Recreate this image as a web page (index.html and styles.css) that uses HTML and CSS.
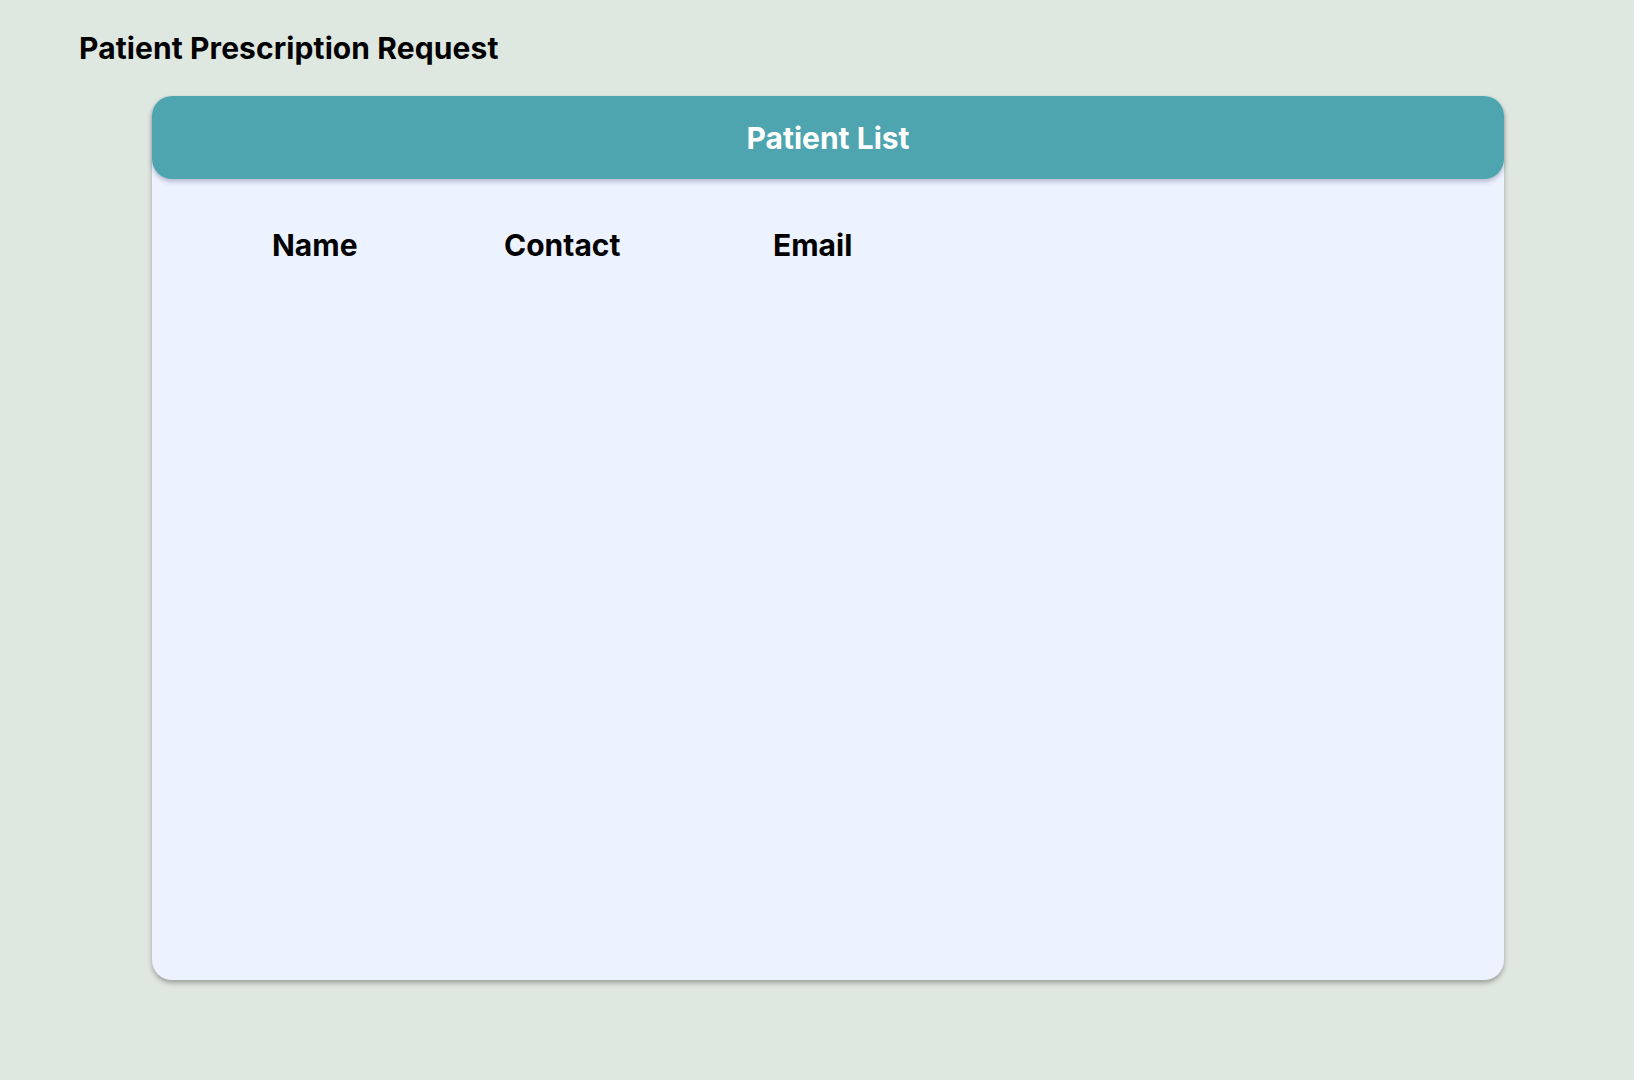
FILE: index.html
```html
<!DOCTYPE html>
<html lang="en">
<head>
<meta charset="utf-8">
<title>Patient Prescription Request</title>
<link rel="stylesheet" href="styles.css">
</head>
<body>
<h1 class="page-title">Patient Prescription Request</h1>
<section class="card">
  <header class="card-header">Patient List</header>
  <div class="card-body">
    <div class="columns">
      <div class="col">Name</div>
      <div class="col">Contact</div>
      <div class="col">Email</div>
    </div>
  </div>
</section>
</body>
</html>
```
FILE: styles.css
```css
html, body {
  margin: 0;
  padding: 0;
}
body {
  background: #dfe8e0;
  font-family: Inter, "Noto Sans", sans-serif;
  color: #000;
  padding: 30px 0 0 79px;
  min-height: 1080px;
  box-sizing: border-box;
}
.page-title {
  margin: 0;
  font-size: 30px;
  font-weight: 700;
  line-height: 36px;
  letter-spacing: 0.1px;
}
.card {
  margin: 30px 0 0 73px;
  width: 1352px;
  height: 884px;
  background: #edf2ff;
  border-radius: 20px;
  box-shadow: 0 3px 5px rgba(0, 0, 0, 0.3);
  display: flex;
  flex-direction: column;
}
.card-header {
  height: 83px;
  flex: none;
  background: #4ea5af;
  border-radius: 20px;
  box-shadow: 0 3px 4px rgba(40, 40, 80, 0.25);
  color: #fff;
  font-size: 30px;
  font-weight: 700;
  display: flex;
  align-items: center;
  justify-content: center;
}
.card-body {
  padding: 48px 0 0 120px;
}
.columns {
  display: grid;
  grid-template-columns: 232px 269px auto;
  font-size: 30px;
  font-weight: 700;
  line-height: 36px;
}
```
